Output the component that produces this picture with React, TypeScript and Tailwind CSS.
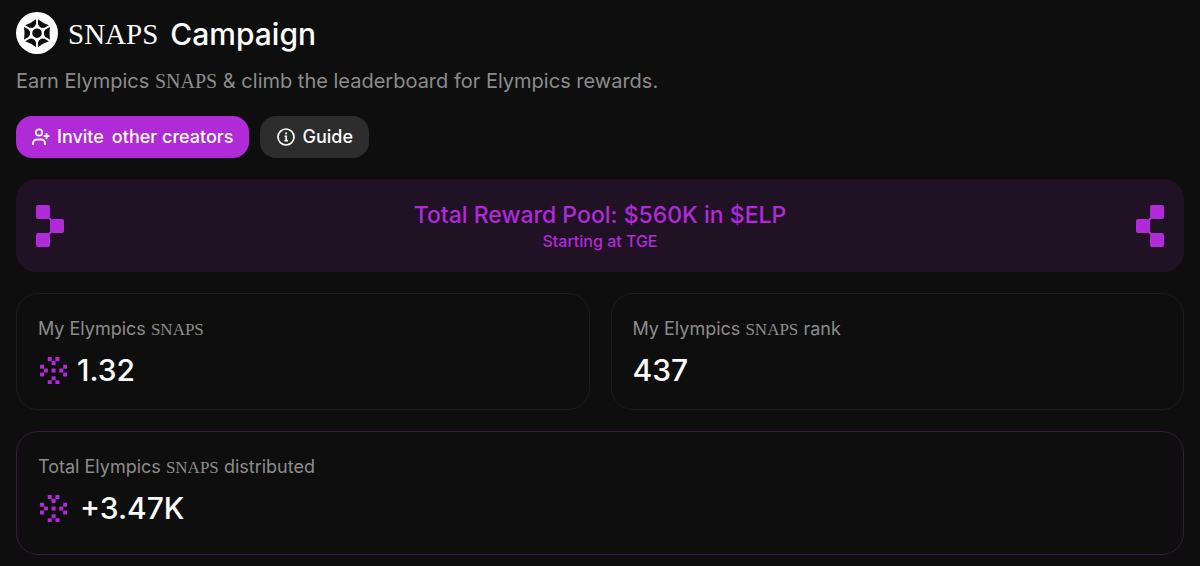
import type { ReactNode } from "react";

function Snaps({ className = "" }: { className?: string }) {
  return <span className={`font-['Liberation_Serif',serif] ${className}`}>SNAPS</span>;
}

const spokes = [0, 60, 120, 180, 240, 300];

function Logo() {
  return (
    <svg className="size-[42px] shrink-0" viewBox="0 0 42 42" aria-hidden="true">
      <circle cx="21" cy="21" r="21" fill="#fff" />
      <path
        d="M21 6.500Q27 11.500 34 13.700Q33 21.200 34 28.700Q27 30.900 21 36Q15 30.900 8 28.700Q9 21.200 8 13.700Q15 11.500 21 6.500Z"
        fill="#0e0e0e"
      />
      {spokes.map((angle) => (
        <path key={angle} d="M20 6h2v6l1.800 3.500h-5.600L20 12Z" fill="#fff" transform={`rotate(${angle} 21 21.200)`} />
      ))}
      <circle cx="21" cy="21.200" r="5.900" fill="#0e0e0e" stroke="#fff" strokeWidth="2.200" />
    </svg>
  );
}

function InviteIcon() {
  return (
    <svg className="size-5 shrink-0" viewBox="0 0 20 20" fill="none" stroke="currentColor" strokeWidth="1.800" aria-hidden="true">
      <circle cx="8" cy="5.500" r="3.200" />
      <path d="M2 18v-1.500a4 4 0 0 1 4-4h4a4 4 0 0 1 4 4V18M15.500 6.200v6M12.500 9.200h6" />
    </svg>
  );
}

function InfoIcon() {
  return (
    <svg className="size-5 shrink-0" viewBox="0 0 20 20" fill="none" stroke="currentColor" strokeWidth="1.700" aria-hidden="true">
      <circle cx="10" cy="10" r="8" />
      <path d="M8.500 9.300h1.700V14M8.500 13.700h3.400M9.200 6.400h1.800" />
    </svg>
  );
}

function Blocks({ flip = false }: { flip?: boolean }) {
  const outer = flip ? 14 : 0;
  const inner = flip ? 0 : 14;
  return (
    <svg className="h-[42px] w-7 shrink-0" viewBox="0 0 28 42" fill="#b12ad8" aria-hidden="true">
      <rect x={outer} y="0" width="14" height="14" rx="2" />
      <rect x={inner} y="14" width="14" height="14" rx="2" />
      <rect x={outer} y="28" width="14" height="14" rx="2" />
      <path d="M13 13h2v2h-2zM13 27h2v2h-2z" />
    </svg>
  );
}

const flake = [[2, 0], [4, 0], [3, 1], [0, 2], [6, 2], [1, 3], [3, 3], [5, 3], [0, 4], [6, 4], [3, 5], [2, 6], [4, 6]];

function Flake() {
  return (
    <svg className="ml-[2px] size-[27px] shrink-0" viewBox="0 0 7 7" fill="#b12ad8" aria-hidden="true">
      {flake.map(([x, y]) => (
        <rect key={`${x}-${y}`} x={x} y={y} width="1.050" height="1.050" rx="0.100" />
      ))}
    </svg>
  );
}

function Stat({ label, value, className }: { label: ReactNode; value: ReactNode; className: string }) {
  return (
    <section className={`rounded-[22px] border px-[21px] pt-[23px] ${className}`}>
      <h2 className="text-lg leading-6 text-[#8c8c8c]">{label}</h2>
      <p className="mt-2 flex items-center text-[30px] leading-10 font-medium">{value}</p>
    </section>
  );
}

export default function App() {
  return (
    <main className="min-h-screen bg-[#0e0e0e] px-4 pt-[11px] pb-3 font-[Inter,sans-serif] text-white">
      <h1 className="flex items-center text-[30px] leading-[42px] font-medium">
        <Logo />
        <Snaps className="ml-[10px] pt-[2px] text-[29px] font-normal" />
        <span className="ml-3 pt-[2px]">Campaign</span>
      </h1>
      <p className="mt-[11px] text-xl leading-[30px] text-[#8c8c8c]">
        Earn Elympics <Snaps /> &amp; climb the leaderboard for Elympics rewards.
      </p>
      <div className="mt-5 flex gap-[11px] text-lg font-medium">
        <button type="button" className="flex h-[42px] items-center gap-[6px] rounded-2xl bg-[#b12ad8] px-[15px]">
          <InviteIcon />
          <span className="flex gap-2">
            <span>Invite</span>
            <span>other creators</span>
          </span>
        </button>
        <button type="button" className="flex h-[42px] items-center gap-[7px] rounded-2xl bg-[#2d2d2d] px-4">
          <InfoIcon />
          Guide
        </button>
      </div>
      <section className="mt-[21px] flex items-center justify-between rounded-[20px] bg-[#211125] px-5 py-[21px] text-center font-medium text-[#b12ad8]">
        <Blocks />
        <div>
          <h2 className="text-[23px] leading-[31px]">Total Reward Pool: $560K in $ELP</h2>
          <p className="text-base leading-5">Starting at TGE</p>
        </div>
        <Blocks flip />
      </section>
      <div className="mt-[21px] grid grid-cols-2 gap-[21px]">
        <Stat
          className="border-[#1d1d1d] pb-[19px]"
          label={<>My Elympics <Snaps className="text-[17px]" /></>}
          value={<><Flake /><span className="ml-[10px]">1.32</span></>}
        />
        <Stat className="border-[#1d1d1d] pb-[19px]" label={<>My Elympics <Snaps className="text-[17px]" /> rank</>} value="437" />
      </div>
      <Stat
        className="mt-[21px] border-[#3b1746] pb-[26px]"
        label={<>Total Elympics <Snaps className="text-[17px]" /> distributed</>}
        value={<><Flake /><span className="ml-[13px]">+3.47K</span></>}
      />
    </main>
  );
}
